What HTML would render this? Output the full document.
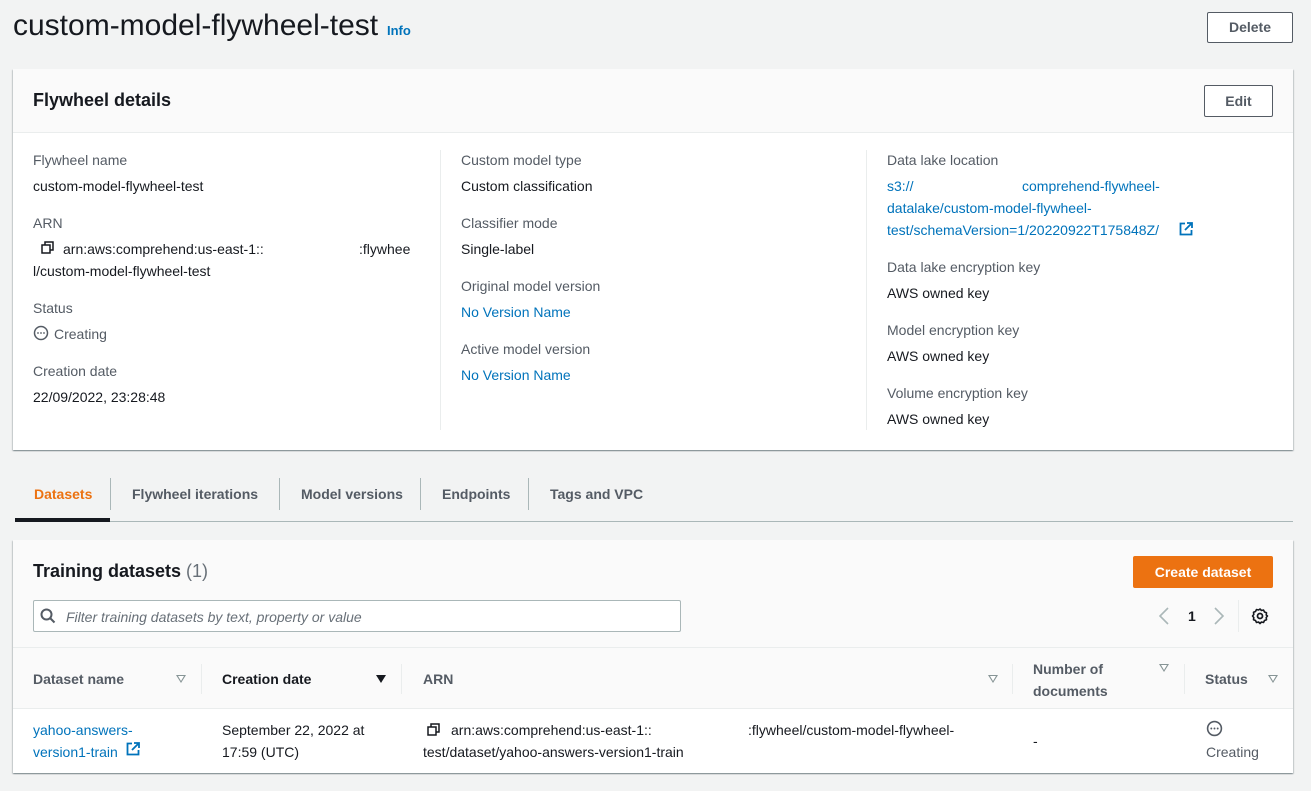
<!DOCTYPE html>
<html><head><style>
*{box-sizing:border-box;margin:0;padding:0}
body{width:1311px;height:791px;background:#f2f3f3;font-family:"Liberation Sans",Arial,sans-serif;color:#16191f;font-size:14px;position:relative;overflow:hidden}
.a{position:absolute}
.lbl{color:#545b64;font-size:14px}
.lnk{color:#0073bb}
.btn{position:absolute;border:1px solid #545b64;border-radius:2px;background:#fff;font-weight:bold;color:#545b64;text-align:center;font-size:14px}
.card{position:absolute;background:#fff;box-shadow:0 1px 1px rgba(0,28,36,.3),1px 1px 1px rgba(0,28,36,.15),-1px 1px 1px rgba(0,28,36,.15)}
.vd{position:absolute;width:1px;background:#eaeded}
.th{position:absolute;font-weight:bold;color:#545b64;font-size:14px}
.tri{position:absolute;width:0;height:0;border-left:5px solid transparent;border-right:5px solid transparent;border-top:8px solid #879596}
.tri:after{content:"";position:absolute;left:-3px;top:-7px;border-left:3px solid transparent;border-right:3px solid transparent;border-top:5px solid #fff}
</style></head><body>
<div class="a" style="left:13px;top:9px;font-size:30px;color:#16191f">custom-model-flywheel-test</div>
<div class="a lnk" style="left:387px;top:23px;font-size:13px;font-weight:bold">Info</div>
<div class="btn" style="left:1207px;top:12px;width:86px;height:31px;line-height:29px">Delete</div>

<div class="card" style="left:13px;top:69px;width:1280px;height:381px">
 <div style="height:64px;background:#fafafa;border-bottom:1px solid #eaeded"></div>
</div>
<div class="a" style="left:33px;top:90px;font-size:18px;font-weight:bold">Flywheel details</div>
<div class="btn" style="left:1204px;top:85px;width:69px;height:32px;line-height:30px">Edit</div>
<div class="vd" style="left:440px;top:150px;height:280px"></div>
<div class="vd" style="left:866px;top:150px;height:280px"></div>

<div class="a lbl" style="left:33px;top:152px">Flywheel name</div>
<div class="a" style="left:33px;top:178px">custom-model-flywheel-test</div>
<div class="a lbl" style="left:33px;top:215px">ARN</div>
<svg class="a" style="left:41px;top:241px" width="13" height="13" viewBox="0 0 13 13"><rect x="1" y="4" width="8" height="8" fill="none" stroke="#16191f" stroke-width="1.5"/><path d="M4 4V1h8v8H9" fill="none" stroke="#16191f" stroke-width="1.5"/></svg>
<div class="a" style="left:63px;top:241px">arn:aws:comprehend:us-east-1::</div>
<div class="a" style="left:359px;top:241px">:flywhee</div>
<div class="a" style="left:33px;top:263px">l/custom-model-flywheel-test</div>
<div class="a lbl" style="left:33px;top:300px">Status</div>
<svg class="a" style="left:33px;top:325px" width="16" height="16" viewBox="0 0 16 16"><circle cx="8" cy="8" r="6.5" fill="none" stroke="#545b64" stroke-width="1.5"/><circle cx="5" cy="8" r=".9" fill="#545b64"/><circle cx="8" cy="8" r=".9" fill="#545b64"/><circle cx="11" cy="8" r=".9" fill="#545b64"/></svg>
<div class="a lbl" style="left:54px;top:326px">Creating</div>
<div class="a lbl" style="left:33px;top:363px">Creation date</div>
<div class="a" style="left:33px;top:389px">22/09/2022, 23:28:48</div>

<div class="a lbl" style="left:461px;top:152px">Custom model type</div>
<div class="a" style="left:461px;top:178px">Custom classification</div>
<div class="a lbl" style="left:461px;top:215px">Classifier mode</div>
<div class="a" style="left:461px;top:241px">Single-label</div>
<div class="a lbl" style="left:461px;top:278px">Original model version</div>
<div class="a lnk" style="left:461px;top:304px">No Version Name</div>
<div class="a lbl" style="left:461px;top:341px">Active model version</div>
<div class="a lnk" style="left:461px;top:367px">No Version Name</div>

<div class="a lbl" style="left:887px;top:152px">Data lake location</div>
<div class="a lnk" style="left:887px;top:178px">s3://</div>
<div class="a lnk" style="left:1022px;top:178px">comprehend-flywheel-</div>
<div class="a lnk" style="left:887px;top:200px">datalake/custom-model-flywheel-</div>
<div class="a lnk" style="left:887px;top:222px">test/schemaVersion=1/20220922T175848Z/</div>
<svg class="a" style="left:1179px;top:222px" width="14" height="14" viewBox="0 0 14 14"><path d="M6 1.5H1.5v11h11V8M8 1h5v5M13 1L6 8" fill="none" stroke="#0073bb" stroke-width="1.8"/></svg>
<div class="a lbl" style="left:887px;top:259px">Data lake encryption key</div>
<div class="a" style="left:887px;top:285px">AWS owned key</div>
<div class="a lbl" style="left:887px;top:322px">Model encryption key</div>
<div class="a" style="left:887px;top:348px">AWS owned key</div>
<div class="a lbl" style="left:887px;top:385px">Volume encryption key</div>
<div class="a" style="left:887px;top:411px">AWS owned key</div>

<div class="a" style="left:15px;top:521px;width:1278px;height:1px;background:#aab7b8"></div>
<div class="a" style="left:15px;top:518px;width:95px;height:4px;background:#16191f"></div>
<div class="a" style="left:34px;top:486px;font-weight:bold;color:#ec7211">Datasets</div>
<div class="vd" style="left:110px;top:478px;height:32px;background:#aab7b8"></div>
<div class="a" style="left:132px;top:486px;font-weight:bold;color:#545b64">Flywheel iterations</div>
<div class="vd" style="left:279px;top:478px;height:32px;background:#aab7b8"></div>
<div class="a" style="left:301px;top:486px;font-weight:bold;color:#545b64">Model versions</div>
<div class="vd" style="left:420px;top:478px;height:32px;background:#aab7b8"></div>
<div class="a" style="left:442px;top:486px;font-weight:bold;color:#545b64">Endpoints</div>
<div class="vd" style="left:528px;top:478px;height:32px;background:#aab7b8"></div>
<div class="a" style="left:550px;top:486px;font-weight:bold;color:#545b64">Tags and VPC</div>

<div class="card" style="left:13px;top:540px;width:1280px;height:233px">
 <div style="height:108px;background:#fafafa;border-bottom:1px solid #eaeded"></div>
 <div style="height:61px;background:#fafafa;border-bottom:1px solid #eaeded"></div>
</div>
<div class="a" style="left:33px;top:561px;font-size:18px;font-weight:bold">Training datasets <span style="font-weight:normal;color:#687078">(1)</span></div>
<div class="a" style="left:1133px;top:556px;width:140px;height:32px;background:#ec7211;color:#fff;font-weight:bold;text-align:center;line-height:32px;border-radius:2px">Create dataset</div>
<div class="a" style="left:33px;top:600px;width:648px;height:32px;border:1px solid #aab7b8;background:#fff;border-radius:2px"></div>
<svg class="a" style="left:40px;top:608px" width="16" height="16" viewBox="0 0 16 16"><circle cx="6.5" cy="6.5" r="5" fill="none" stroke="#545b64" stroke-width="2"/><path d="M10 10l4.5 4.5" stroke="#545b64" stroke-width="2"/></svg>
<div class="a" style="left:66px;top:609px;font-style:italic;color:#687078">Filter training datasets by text, property or value</div>
<svg class="a" style="left:1158px;top:607px" width="12" height="18" viewBox="0 0 12 18"><path d="M10 1L2 9l8 8" fill="none" stroke="#aab7b8" stroke-width="1.6"/></svg>
<div class="a" style="left:1188px;top:608px;font-weight:bold">1</div>
<svg class="a" style="left:1213px;top:607px" width="12" height="18" viewBox="0 0 12 18"><path d="M2 1l8 8-8 8" fill="none" stroke="#aab7b8" stroke-width="1.6"/></svg>
<div class="vd" style="left:1238px;top:600px;height:32px"></div>
<svg class="a" style="left:1251px;top:607px" width="18" height="18" viewBox="0 0 18 18"><circle cx="9" cy="9" r="2.5" fill="none" stroke="#16191f" stroke-width="1.8"/><path d="M9 2l1.5 1.5 2-.5 1 2 2 .8-.3 2.2L16.5 9l-1.3 1.5.3 2.2-2 .8-1 2-2-.5L9 16.5l-1.5-1.5-2 .5-1-2-2-.8.3-2.2L1.5 9l1.3-1.5-.3-2.2 2-.8 1-2 2 .5z" fill="none" stroke="#16191f" stroke-width="1.6" stroke-linejoin="round"/></svg>

<div class="th" style="left:33px;top:671px">Dataset name</div>
<div class="tri" style="left:176px;top:675px"></div>
<div class="vd" style="left:201px;top:664px;height:30px"></div>
<div class="th" style="left:222px;top:671px;color:#16191f">Creation date</div>
<div class="a" style="left:376px;top:675px;border-left:5px solid transparent;border-right:5px solid transparent;border-top:8px solid #16191f"></div>
<div class="vd" style="left:401px;top:664px;height:30px"></div>
<div class="th" style="left:423px;top:671px">ARN</div>
<div class="tri" style="left:988px;top:675px"></div>
<div class="vd" style="left:1012px;top:664px;height:30px"></div>
<div class="th" style="left:1033px;top:658px;line-height:22px">Number of<br>documents</div>
<div class="tri" style="left:1159px;top:664px"></div>
<div class="vd" style="left:1184px;top:664px;height:30px"></div>
<div class="th" style="left:1205px;top:671px">Status</div>
<div class="tri" style="left:1268px;top:675px"></div>

<div class="a lnk" style="left:33px;top:719px;line-height:22px">yahoo-answers-<br>version1-train</div>
<svg class="a" style="left:126px;top:742px" width="14" height="14" viewBox="0 0 14 14"><path d="M6 1.5H1.5v11h11V8M8 1h5v5M13 1L6 8" fill="none" stroke="#0073bb" stroke-width="1.8"/></svg>
<div class="a" style="left:222px;top:719px;line-height:22px">September 22, 2022 at<br>17:59 (UTC)</div>
<svg class="a" style="left:427px;top:723px" width="13" height="13" viewBox="0 0 13 13"><rect x="1" y="4" width="8" height="8" fill="none" stroke="#16191f" stroke-width="1.5"/><path d="M4 4V1h8v8H9" fill="none" stroke="#16191f" stroke-width="1.5"/></svg>
<div class="a" style="left:451px;top:722px">arn:aws:comprehend:us-east-1::</div>
<div class="a" style="left:748px;top:722px">:flywheel/custom-model-flywheel-</div>
<div class="a" style="left:423px;top:744px">test/dataset/yahoo-answers-version1-train</div>
<div class="a" style="left:1033px;top:733px">-</div>
<svg class="a" style="left:1206px;top:720px" width="17" height="17" viewBox="0 0 16 16"><circle cx="8" cy="8" r="6.5" fill="none" stroke="#545b64" stroke-width="1.5"/><circle cx="5" cy="8" r=".9" fill="#545b64"/><circle cx="8" cy="8" r=".9" fill="#545b64"/><circle cx="11" cy="8" r=".9" fill="#545b64"/></svg>
<div class="a lbl" style="left:1206px;top:744px">Creating</div>
</body></html>
